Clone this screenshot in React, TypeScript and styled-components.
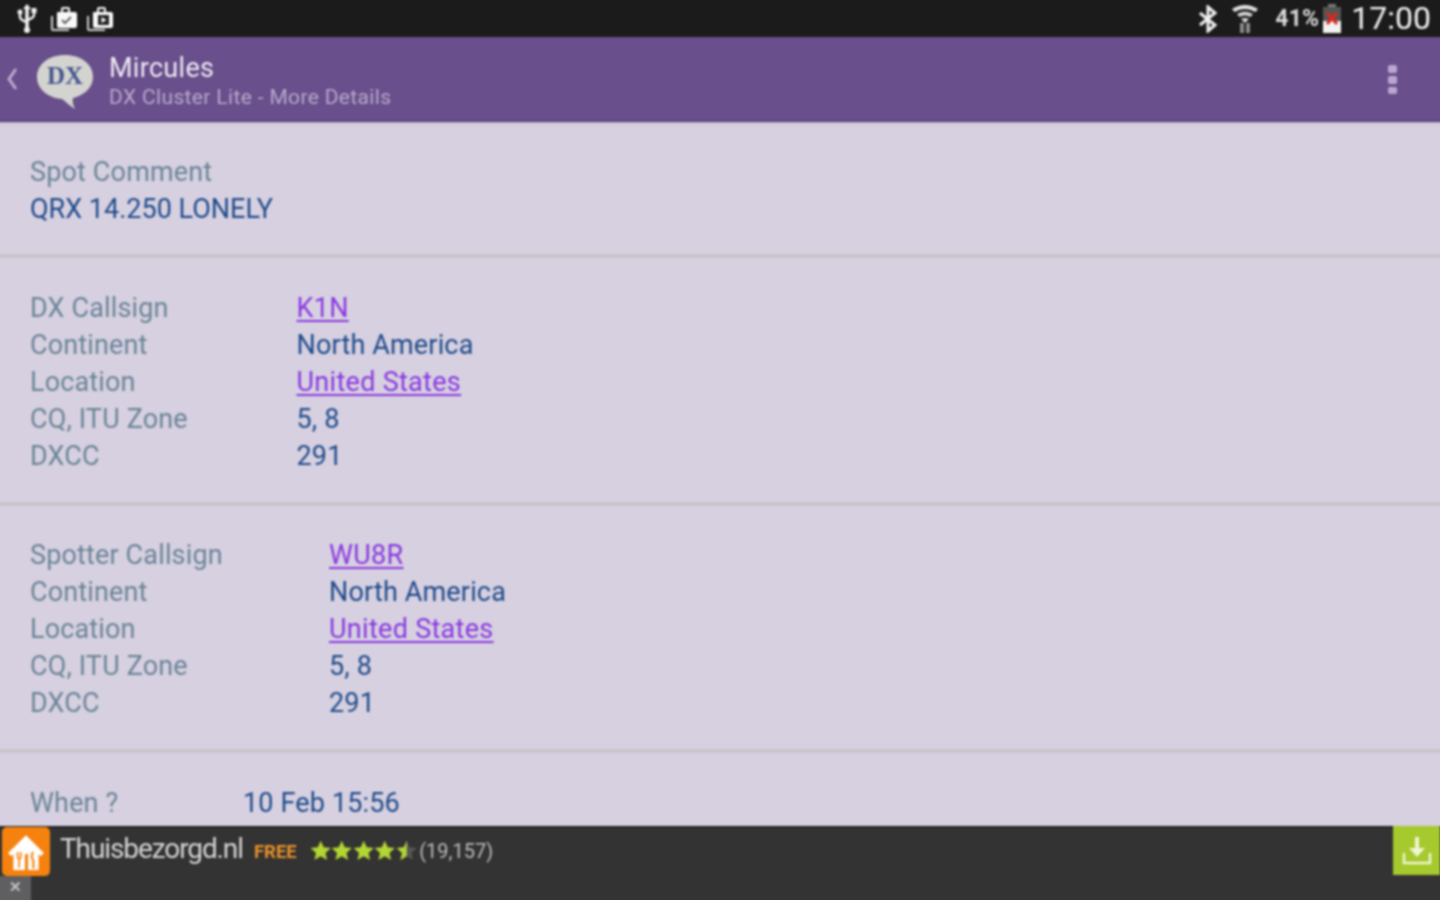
import React from "react";
import styled, { createGlobalStyle } from "styled-components";

const Global = createGlobalStyle`
  html, body { margin: 0; padding: 0; background: #d6d0e0; overflow: hidden; }
  body { font-family: Roboto, "Liberation Sans", sans-serif; }
`;

const Viewport = styled.div`
  width: 1440px;
  height: 900px;
  overflow: hidden;
`;

/* The soft focus of the picture needs a bleed of 8px past the window, so the bars do not fade at its edges. */
const Screen = styled.div`
  width: 1456px;
  height: 916px;
  margin: -8px 0 0 -8px;
  display: flex;
  flex-direction: column;
  filter: blur(0.8px);
`;

const StatusBar = styled.div`
  height: 45px;
  flex: none;
  box-sizing: border-box;
  background: #1b1b1b;
  display: flex;
  align-items: center;
  justify-content: space-between;
  padding: 8px 17px 0 25px;
`;
const StatusGroup = styled.div`
  display: flex;
  align-items: center;
  gap: ${(p: { $gap: number }) => p.$gap}px;
`;
const Battery = styled.span`
  color: #d9d9d9;
  font-size: 23px;
  font-weight: 700;
  letter-spacing: 0.2px;
  margin-left: 3px;
  margin-right: -10px;
`;
const Clock = styled.span`
  color: #f2f2f2;
  font-size: 32px;
  line-height: 37px;
  margin-left: -4px;
`;

const Header = styled.header`
  height: 85px;
  flex: none;
  box-sizing: border-box;
  background: #694f8b;
  border-bottom: 2px solid #5b457c;
  display: flex;
  align-items: center;
  padding: 0 50px 0 14px;
`;
const Logo = styled.div`
  margin-left: 18px;
  margin-top: 7px;
  display: flex;
`;
const Titles = styled.div`
  margin-left: 15px;
  flex: 1;
  display: flex;
  flex-direction: column;
  margin-top: 6px;
`;
const Title = styled.div`
  color: #eee9f4;
  font-size: 27px;
  line-height: 31px;
  letter-spacing: 0.3px;
`;
const Subtitle = styled.div`
  color: #b8aacd;
  font-size: 21px;
  line-height: 26px;
  letter-spacing: 0.35px;
`;

const Content = styled.main`
  flex: 1;
  min-height: 0;
  overflow: hidden;
  background: #d6d0e0;
  box-shadow: inset 0 3px 3px -2px #b9b2c6;
`;
const Section = styled.section`
  padding: ${(p: { $top: number; $bottom: number }) => `${p.$top}px 38px ${p.$bottom}px`};
  border-bottom: 4px solid #c8c5cc;
  &:last-child { border-bottom: none; }
`;
const Row = styled.div`
  display: grid;
  grid-template-columns: ${(p: { $col: number }) => p.$col}px auto;
  justify-content: start;
  height: 37px;
  line-height: 37px;
  font-size: 27px;
  letter-spacing: 0.15px;
  white-space: nowrap;
`;
const Line = styled.div`
  height: 37px;
  line-height: 37px;
  font-size: 27px;
  letter-spacing: ${(p: { $value?: boolean }) => (p.$value ? "0" : "0.15px")};
  color: ${(p: { $value?: boolean }) => (p.$value ? "#1f4a8a" : "#6b8598")};
`;
const Label = styled.span`
  color: #6b8598;
`;
const Value = styled.span`
  color: #1f4a8a;
`;
const Link = styled.a`
  color: #8a38e0;
  letter-spacing: 0.3px;
  text-decoration: underline;
  text-underline-offset: 3px;
`;

const AdBar = styled.footer`
  height: 82px;
  flex: none;
  box-sizing: border-box;
  background: #333333;
  border-top: 2px solid #222;
  position: relative;
  display: flex;
  align-items: flex-start;
  padding-left: 68px;
  gap: 11px;
`;
const AdIcon = styled.div`
  position: absolute;
  left: 10px;
  top: -1px;
  width: 48px;
  height: 49px;
  border-radius: 5px;
  background: #f5820f;
  display: flex;
  align-items: center;
  justify-content: center;
`;
const AdName = styled.span`
  color: #d4d4d4;
  font-size: 28px;
  line-height: 42px;
  letter-spacing: -1.1px;
`;
const Free = styled.span`
  color: #e8912a;
  font-size: 18.5px;
  font-weight: 700;
  line-height: 48px;
`;
const Stars = styled.span`
  display: flex;
  align-items: center;
  height: 44px;
  margin-left: 2px;
`;
const Count = styled.span`
  color: #bdbdbd;
  font-size: 20px;
  line-height: 47px;
  margin-left: -9px;
`;
const Close = styled.div`
  position: absolute;
  left: 0;
  bottom: 0;
  box-sizing: border-box;
  width: 39px;
  height: 32px;
  padding: 0 0 8px 8px;
  background: #5f5f62;
  color: #c4c4c4;
  font-size: 15px;
  font-weight: 700;
  line-height: 22px;
  text-align: center;
`;
const Install = styled.div`
  position: absolute;
  right: 8px;
  top: -2px;
  width: 47px;
  height: 49px;
  background: #a6c92e;
  display: flex;
  align-items: center;
  justify-content: center;
`;

const Usb = () => (
  <svg width="25" height="30" viewBox="0 0 25 30" fill="none" stroke="#f2f2f2" strokeWidth="2.5">
    <path d="M10 4v23" strokeWidth="3.500" />
    <path d="M3 10v3q0 3 7 5M17 8v3q0 3-7 5" />
    <path d="M10 0l4 5H6z" fill="#f2f2f2" stroke="none" />
    <circle cx="3" cy="8" r="2.500" fill="#f2f2f2" stroke="none" />
    <rect x="14.500" y="4" width="5" height="5" fill="#f2f2f2" stroke="none" />
    <circle cx="10" cy="26" r="3" fill="#f2f2f2" stroke="none" />
  </svg>
);
const Bag = ({ play }: { play?: boolean }) => (
  <svg width="28" height="26" viewBox="0 0 28 26">
    <path d="M1 10v13q0 2 2 2h16v-2H3V10z" fill="#cfcfcf" />
    <path
      d="M7 7q0-1 1-1h3V3q0-2 2-2h5q2 0 2 2v3h5q2 0 2 2v12q0 2-2 2H9q-2 0-2-2z"
      fill="#f8f8f8"
    />
    <rect x="13" y="3" width="5" height="3" fill="#1b1b1b" />
    {play ? (
      <>
        <path d="M12 9h11v10H12z" fill="#222" />
        <path d="M15.500 11l5 3-5 3z" fill="#f8f8f8" />
      </>
    ) : (
      <path d="M12 14l3 3 6-6" fill="none" stroke="#666" strokeWidth="2" />
    )}
  </svg>
);
const Bluetooth = () => (
  <svg width="20" height="28" viewBox="0 0 20 28" fill="none" stroke="#f0f0f0" strokeWidth="3">
    <path d="M2 8l15 12-7 6V2l7 6L2 20" />
  </svg>
);
const Wifi = () => (
  <svg width="28" height="29" viewBox="0 0 28 29">
    <path d="M1 5q13-8 26 0l-2.500 3q-10.500-6-21 0z" fill="#e2e2e2" />
    <path d="M6 10q8-5 16 0l-2.500 3q-5.500-3-11 0z" fill="#d0d0d0" />
    <path d="M10 15q4-2 8 0l-4 4z" fill="#d8d8d8" />
    <rect x="9" y="19" width="4" height="10" fill="#8a8a8a" />
    <rect x="15" y="19" width="4" height="10" fill="#8a8a8a" />
  </svg>
);
const BatteryIcon = () => (
  <svg width="20" height="29" viewBox="0 0 20 29">
    <rect x="6" y="0" width="8" height="4" fill="#777" />
    <rect x="1" y="3" width="18" height="26" fill="#555" />
    <rect x="1" y="17" width="18" height="12" fill="#f2f2f2" />
    <path d="M5 9l10 11M15 9L5 20" stroke="#e0261c" strokeWidth="3" />
  </svg>
);
const Chevron = () => (
  <svg width="12" height="22" viewBox="0 0 12 22" fill="none" stroke="#b9abcd" strokeWidth="3">
    <path d="M10 1L3 11l7 10" />
  </svg>
);
const DxLogo = () => (
  <svg width="58" height="56" viewBox="0 0 58 56">
    <path
      d="M29 1C13 1 1 10 1 23c0 12 11 21 25 22 3 2 8 7 13 10-2-4-3-8-2-11 12-3 20-11 20-21C57 10 45 1 29 1z"
      fill="#d3d4cf"
    />
    <text
      x="29"
      y="30"
      textAnchor="middle"
      fontFamily="'Liberation Serif', serif"
      fontWeight="700"
      fontSize="25"
      fill="#46568f"
    >
      DX
    </text>
  </svg>
);
const Dots = () => (
  <svg width="10" height="32" viewBox="0 0 10 32" fill="#b9a7d2">
    <rect x="0" y="2" width="9" height="8" rx="2" />
    <rect x="0" y="13" width="9" height="8" rx="2" />
    <rect x="0" y="24" width="9" height="7" rx="2" />
  </svg>
);
const starPath = "M12 1l3.300 7.500 8 .8-6 5.400 1.800 8L12 18.500 4.900 22.700l1.800-8-6-5.400 8-.8z";
const Star = ({ half }: { half?: boolean }) => (
  <svg width="21.500" height="23" viewBox="0 0 24 24">
    <defs>
      <clipPath id="half-star">
        <rect x="0" y="0" width="12" height="24" />
      </clipPath>
    </defs>
    {half && <path d={starPath} fill="#555" />}
    <path d={starPath} fill="#b2d632" clipPath={half ? "url(#half-star)" : undefined} />
  </svg>
);
const House = () => (
  <svg width="40" height="40" viewBox="0 0 38 38">
    <path d="M19 3L2 20l3 3 2-2v15h11V21h3v15h10V21l2 2 3-3z" fill="#fff" />
    <path d="M11 19v6m3-6v6m-3 0h3m-1.500 0v9" stroke="#f5820f" strokeWidth="1.600" fill="none" />
    <path d="M26 19c-2 2-2 6 0 8v8" stroke="#f5820f" strokeWidth="2" fill="none" />
  </svg>
);
const Download = () => (
  <svg width="30" height="30" viewBox="0 0 30 30" fill="none" stroke="#eef6cf">
    <path d="M15 1v15" strokeWidth="4" />
    <path d="M7 12h16l-8 9z" fill="#eef6cf" stroke="none" />
    <path d="M2 17v10h26V17" strokeWidth="2.500" />
  </svg>
);

type Item = { label: string; value: string; link?: boolean };

const spotRows = (call: string): Item[] => [
  { label: call.startsWith("K") ? "DX Callsign" : "Spotter Callsign", value: call, link: true },
  { label: "Continent", value: "North America" },
  { label: "Location", value: "United States", link: true },
  { label: "CQ, ITU Zone", value: "5, 8" },
  { label: "DXCC", value: "291" },
];

const Rows = ({ items, col }: { items: Item[]; col: number }) => (
  <>
    {items.map((it) => (
      <Row key={it.label} $col={col}>
        <Label>{it.label}</Label>
        {it.link ? <Link href="#">{it.value}</Link> : <Value>{it.value}</Value>}
      </Row>
    ))}
  </>
);

export default function App() {
  return (
    <Viewport>
      <Global />
      <Screen>
        <StatusBar>
          <StatusGroup $gap={8}>
            <Usb />
            <Bag />
            <Bag play />
          </StatusGroup>
          <StatusGroup $gap={13}>
            <Bluetooth />
            <Wifi />
            <Battery>41%</Battery>
            <BatteryIcon />
            <Clock>17:00</Clock>
          </StatusGroup>
        </StatusBar>
        <Header>
          <Chevron />
          <Logo>
            <DxLogo />
          </Logo>
          <Titles>
            <Title>Mircules</Title>
            <Subtitle>DX Cluster Lite - More Details</Subtitle>
          </Titles>
          <Dots />
        </Header>
        <Content>
          <Section $top={32} $bottom={26}>
            <Line>Spot Comment</Line>
            <Line $value>QRX 14.250 LONELY</Line>
          </Section>
          <Section $top={32} $bottom={27}>
            <Rows items={spotRows("K1N")} col={266.5} />
          </Section>
          <Section $top={31} $bottom={27}>
            <Rows items={spotRows("WU8R")} col={299} />
          </Section>
          <Section $top={32} $bottom={0}>
            <Rows items={[{ label: "When ?", value: "10 Feb 15:56" }]} col={213} />
          </Section>
        </Content>
        <AdBar>
          <AdIcon>
            <House />
          </AdIcon>
          <AdName>Thuisbezorgd.nl</AdName>
          <Free>FREE</Free>
          <Stars>
            <Star />
            <Star />
            <Star />
            <Star />
            <Star half />
          </Stars>
          <Count>(19,157)</Count>
          <Close>✕</Close>
          <Install>
            <Download />
          </Install>
        </AdBar>
      </Screen>
    </Viewport>
  );
}
